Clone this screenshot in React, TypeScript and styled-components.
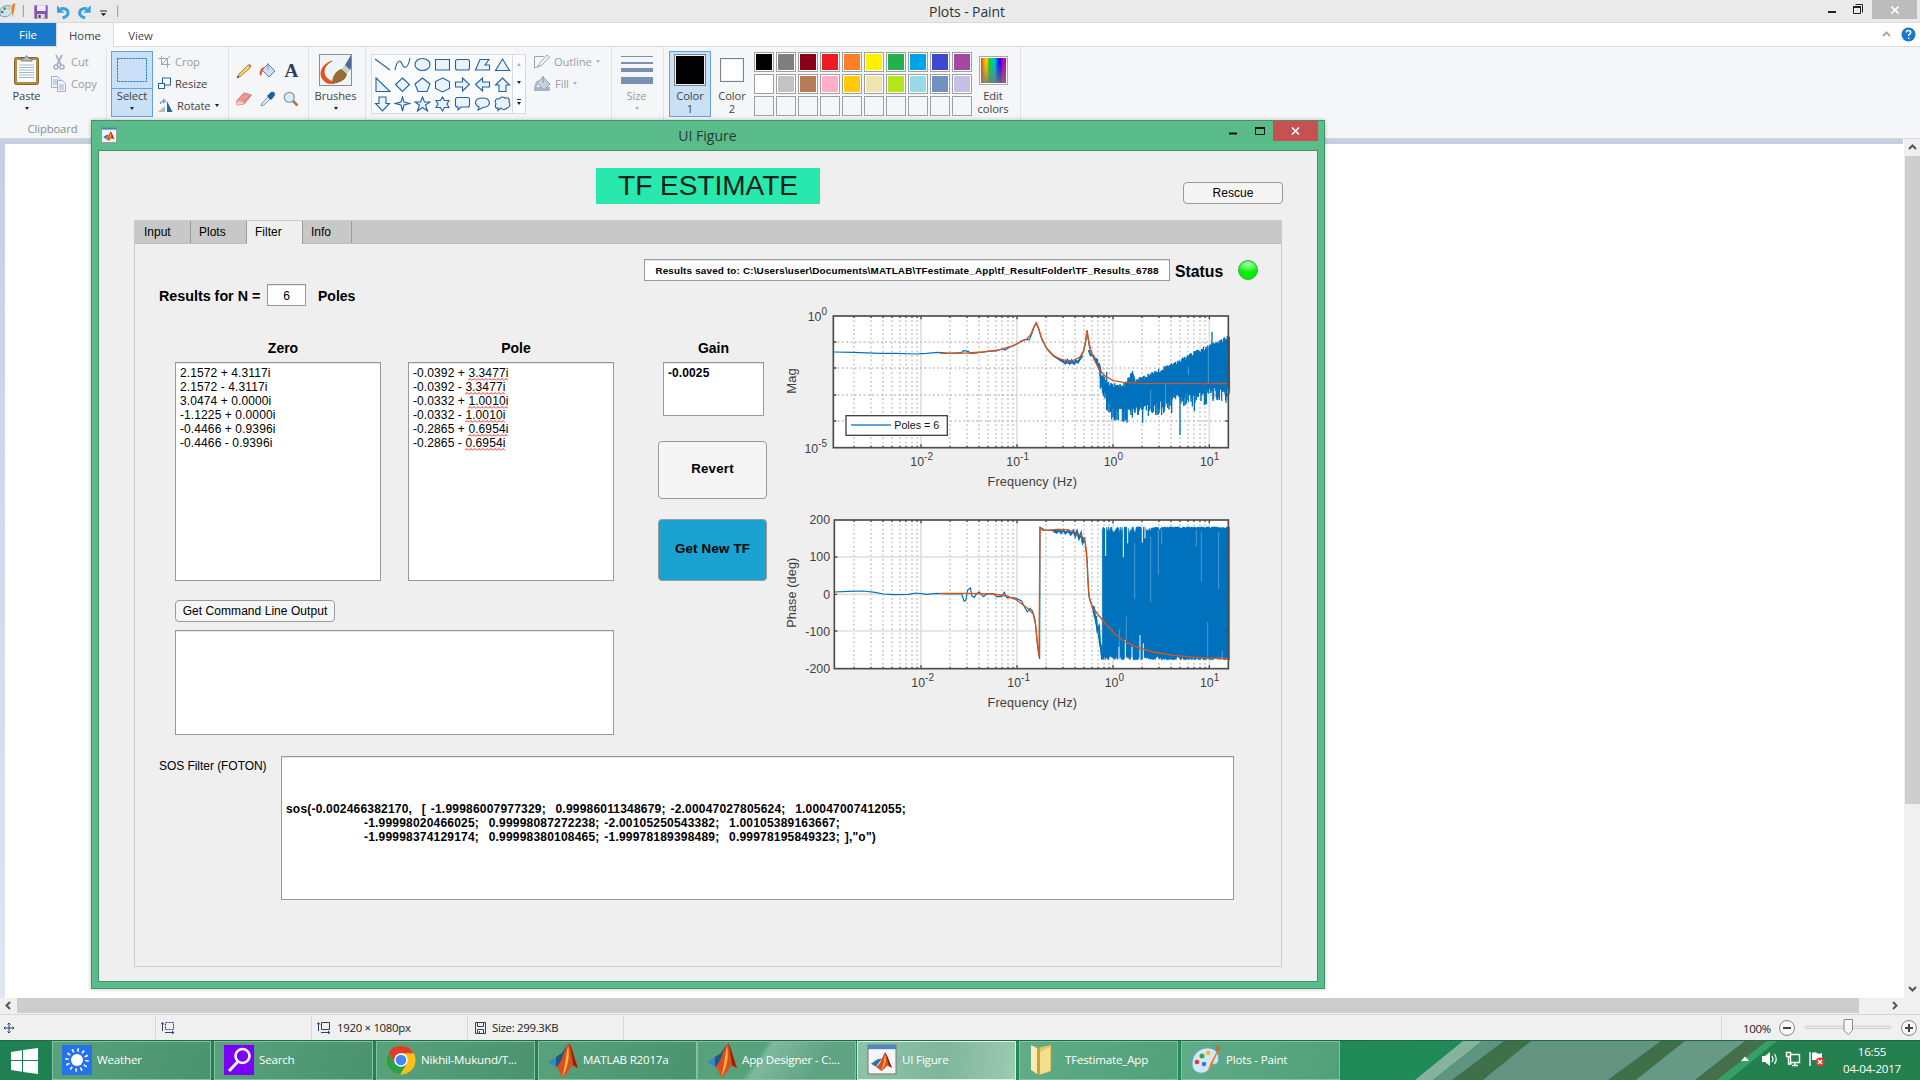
import React from "react";
import styled, { createGlobalStyle, css } from "styled-components";

const ui = `"Open Sans", "Noto Sans", sans-serif`;
const arial = `"Liberation Sans", Arial, sans-serif`;

const Global = createGlobalStyle`
  * { box-sizing: border-box; }
  html, body { margin: 0; padding: 0; overflow: hidden; }
  svg { display: block; flex: none; }
`;

/* ---------- desktop ---------- */
const Desktop = styled.div`
  position: relative;
  width: 1920px;
  height: 1080px;
  display: flex;
  flex-direction: column;
  overflow: hidden;
  background: #fff;
  font-family: ${ui};
`;

/* ---------- Paint ---------- */
const TitleBar = styled.header`
  height: 23px;
  display: grid;
  grid-template-columns: 1fr auto 1fr;
  background: #eaeaea;
  border-bottom: 1px solid #d9d9d9;
`;
const QuickTools = styled.div`
  display: flex;
  align-items: flex-start;
`;
const AppTitle = styled.div`
  font-size: 14px;
  line-height: 23px;
  color: #333;
  letter-spacing: -0.1px;
  padding-left: 14px;
`;
const WindowButtons = styled.div`
  display: flex;
  justify-content: flex-end;
  padding-right: 3px;
`;
const CloseButton = styled.button<{ $w: number; $h: number; $bg: string }>`
  width: ${(p) => p.$w}px;
  height: ${(p) => p.$h}px;
  padding: 0;
  border: 0;
  background: ${(p) => p.$bg};
  display: flex;
  align-items: center;
  justify-content: center;
`;
const MenuTabs = styled.nav`
  height: 24px;
  display: flex;
  background: #fff;
  border-bottom: 1px solid #d9dadc;
  font-size: 11.3px;
  color: #444;
`;
const FileTab = styled.div`
  width: 56px;
  height: 23px;
  line-height: 24px;
  text-align: center;
  background: #1979ca;
  color: #fff;
`;
const MenuTab = styled.div<{ $active?: boolean; $w: number }>`
  width: ${(p) => p.$w}px;
  height: 24px;
  line-height: 26px;
  text-align: center;
  ${(p) =>
    p.$active &&
    css`
      background: #f5f6f7;
      border: 1px solid #dadbdc;
      border-top: 0;
      border-bottom: 0;
    `}
`;
const MenuEnd = styled.div`
  margin-left: auto;
  display: flex;
  align-items: center;
  gap: 10px;
  padding-right: 4px;
`;
const Ribbon = styled.section`
  height: 92px;
  display: flex;
  background: #f4f6f8;
  border-bottom: 1px solid #d5d8dc;
  font-size: 11.2px;
  letter-spacing: -0.1px;
  color: #444;
`;
const Group = styled.div<{ $w: number; $pl?: number }>`
  width: ${(p) => p.$w}px;
  padding-left: ${(p) => p.$pl ?? 0}px;
  padding-top: 4px;
  display: flex;
  align-items: flex-start;
  flex: none;
  border-right: 1px solid #e0e2e4;
`;
const ClipboardGroup = styled(Group)`
  flex-wrap: wrap;
`;
const GroupName = styled.div`
  width: 105px;
  line-height: 16px;
  margin-top: 3px;
  text-align: center;
  color: #8a8d90;
`;
const BigButton = styled.div<{ $w: number; $on?: boolean; $off?: boolean }>`
  width: ${(p) => p.$w}px;
  height: 66px;
  display: flex;
  flex-direction: column;
  align-items: center;
  color: ${(p) => (p.$off ? "#999ca0" : "#444")};
  border: 1px solid ${(p) => (p.$on ? "#62a2e4" : "transparent")};
  background: ${(p) => (p.$on ? "#c9e0f7" : "transparent")};
`;
const IconSlot = styled.div<{ $line?: boolean }>`
  height: 37px;
  width: 100%;
  display: flex;
  justify-content: center;
  align-items: center;
  border-bottom: 1px solid ${(p) => (p.$line ? "#62a2e4" : "transparent")};
`;
const BigLabel = styled.div`
  text-align: center;
  line-height: 13px;
`;
const Down = styled.i<{ $off?: boolean; $up?: boolean; $mt?: number }>`
  width: 0;
  height: 0;
  margin-top: ${(p) => p.$mt ?? 0}px;
  border: 2.5px solid transparent;
  ${(p) =>
    p.$up
      ? css`border-top: 0; border-bottom: 3px solid #aeb2b8;`
      : css`border-bottom: 0; border-top: 3px solid ${p.$off ? "#aeb2b8" : "#222"};`}
`;
const SmallRows = styled.div<{ $ml: number }>`
  margin-left: ${(p) => p.$ml}px;
  display: flex;
  flex-direction: column;
`;
const SmallRow = styled.div<{ $off?: boolean }>`
  height: 22px;
  padding-bottom: 1px;
  display: flex;
  align-items: center;
  gap: 4px;
  color: ${(p) => (p.$off ? "#9a9da1" : "#444")};
  white-space: nowrap;
`;
const ToolGrid = styled.div`
  display: grid;
  grid-template-columns: repeat(3, 23.7px);
  grid-auto-rows: 28px;
  padding-top: 6px;
  justify-items: center;
  align-items: center;
`;
const ShapeBox = styled.div`
  height: 60px;
  margin-top: 3px;
  display: flex;
  border: 1px solid #d8dadd;
  background: #fafbfd;
`;
const ShapeGrid = styled.div`
  display: grid;
  grid-template-columns: repeat(7, 20px);
  grid-auto-rows: 19.7px;
  align-items: center;
  justify-items: center;
`;
const ShapeScroll = styled.div`
  width: 13px;
  display: flex;
  flex-direction: column;
  align-items: center;
  justify-content: space-around;
  border-left: 1px solid #d8dadd;
`;
const MoreShapes = styled.div`
  border-top: 1px solid #333;
  padding-top: 2px;
`;
const SizeBars = styled.div`
  width: 32px;
  height: 28px;
  display: flex;
  flex-direction: column;
  justify-content: space-between;
`;
const Bar = styled.div<{ $h: number }>`
  height: ${(p) => p.$h}px;
  background: #7b8fb4;
`;
const Chip = styled.div<{ $s: number; $c: string }>`
  width: ${(p) => p.$s}px;
  height: ${(p) => p.$s}px;
  border: 1px solid #7d8287;
  padding: 1px;
  background: linear-gradient(${(p) => p.$c}, ${(p) => p.$c}) content-box, #e8f1fa;
`;
const Palette = styled.div`
  display: grid;
  grid-template-columns: repeat(10, 20px);
  grid-auto-rows: 20px;
  gap: 2px;
  margin: 1px 0 0 1px;
`;
const Cell = styled.div<{ $c?: string }>`
  border: 1px solid #a0a0a0;
  padding: 1px;
  background: ${(p) => (p.$c ? `linear-gradient(${p.$c}, ${p.$c}) content-box, #fff` : "#f5f6f8")};
`;
const Rainbow = styled.div`
  width: 29px;
  height: 29px;
  border: 2px solid #fff;
  outline: 1px solid #aaa;
  outline-offset: -1px;
  background: linear-gradient(transparent 20%, #777c),
    linear-gradient(90deg, #e33, #f90, #dd0, #2c2, #0c8, #0bd, #04e, #30d, #c0c, #e03);
`;
const Workspace = styled.main`
  height: 859px;
  display: flex;
`;
const Margin = styled.div`
  width: 5px;
  background: linear-gradient(#c5cfe0, #dde7f2);
`;
const Canvas = styled.div`
  flex: 1;
  border-top: 5px solid #c5cfe0;
  background: #fff;
`;
const VScroll = styled.div`
  width: 17px;
  display: flex;
  flex-direction: column;
  align-items: center;
  background: #f0f0f0;
  border-left: 1px solid #fff;
`;
const VThumb = styled.div`
  width: 15px;
  height: 648px;
  background: #cdcdcd;
`;
const ArrowSlot = styled.div<{ $w: number; $h: number }>`
  width: ${(p) => p.$w}px;
  height: ${(p) => p.$h}px;
  display: flex;
  align-items: center;
  justify-content: center;
`;
const Fill = styled.div`
  flex: 1;
`;
const HScroll = styled.div`
  height: 16px;
  display: flex;
  background: #f0f0f0;
`;
const HThumb = styled.div`
  width: 1842px;
  height: 15px;
  background: #cdcdcd;
`;
const StatusBar = styled.footer`
  height: 26px;
  display: flex;
  background: #f0f0f0;
  border-top: 1px solid #d7d7d7;
  font-size: 11.4px;
  letter-spacing: -0.3px;
  color: #222;
  padding-top: 1px;
`;
const StatusPart = styled.div<{ $w: number; $pl?: number }>`
  width: ${(p) => p.$w}px;
  padding-left: ${(p) => p.$pl ?? 4}px;
  display: flex;
  align-items: center;
  gap: 6px;
  height: 23px;
  border-right: 1px solid #d7d7d7;
`;
const ZoomPart = styled.div`
  width: 198px;
  display: flex;
  align-items: center;
  gap: 2px;
  padding-left: 21px;
`;

/* ---------- task bar ---------- */
const TaskBar = styled.div`
  position: relative;
  height: 40px;
  display: flex;
  background: linear-gradient(90deg, #1f8052, #238a5a 60%, #1f8a58 72%, #238f5a);
  border-top: 1px solid #1b6b46;
`;
const Wallpaper = styled.div`
  position: absolute;
  left: 1341px;
  top: 0;
`;
const Start = styled.div`
  width: 52px;
  display: flex;
  align-items: center;
  justify-content: center;
  padding: 0 3px 0 0;
`;
const Task = styled.div<{ $bg: string; $ml?: number; $active?: boolean; $gap?: number }>`
  width: 159px;
  height: 39px;
  margin-left: ${(p) => p.$ml ?? 3}px;
  padding: 0 0 2px 9px;
  display: flex;
  align-items: center;
  gap: ${(p) => p.$gap ?? 5}px;
  border: 1px solid ${(p) => (p.$active ? "#dff2e8" : "#86c0a2")};
  background: ${(p) => p.$bg};
  color: #fff;
  font-size: 11.6px;
  letter-spacing: -0.2px;
  white-space: nowrap;
`;
const Tray = styled.div`
  position: relative;
  margin-left: auto;
  display: flex;
  align-items: center;
  padding: 0 18px 2px 0;
`;
const TrayIcons = styled.div`
  margin-right: 13px;
  padding-bottom: 1px;
`;
const Clock = styled.div`
  width: 60px;
  text-align: center;
  color: #fff;
  font-size: 11.6px;
  letter-spacing: -0.25px;
  line-height: 17px;
`;

/* ---------- UI Figure window ---------- */
const Figure = styled.section`
  position: absolute;
  left: 91px;
  top: 120px;
  width: 1234px;
  height: 869px;
  display: flex;
  flex-direction: column;
  padding: 0 6px 6px;
  background: #5bbc8b;
  border: 1px solid #449168;
  box-shadow: 0 0 4px rgba(0, 0, 0, 0.25);
`;
const FigureBar = styled.div`
  height: 29px;
  flex: none;
  display: grid;
  grid-template-columns: 1fr auto 1fr;
`;
const FigureIcon = styled.div`
  padding: 6px 0 0 3px;
`;
const FigureName = styled.div`
  font-size: 14px;
  letter-spacing: 0;
  line-height: 29px;
  padding-right: 1px;
  color: #263a30;
`;
const FigureButtons = styled.div`
  display: flex;
  justify-content: flex-end;
  align-items: flex-start;
`;
const FigureBody = styled.div`
  flex: 1;
  border: 1px solid #449168;
  background: #efefef;
  padding: 0 35px 14px 35px;
  display: flex;
  flex-direction: column;
  font-family: ${arial};
  font-size: 12px;
  color: #000;
`;
const Head = styled.div`
  height: 69px;
  display: grid;
  grid-template-columns: 1fr auto 1fr;
`;
const Banner = styled.h1`
  margin: 17px 0 0;
  width: 224px;
  height: 36px;
  line-height: 36px;
  text-align: center;
  background: #28e8ae;
  color: #0c2216;
  font-size: 28px;
  font-weight: 400;
`;
const Button = styled.button<{ $w: number; $h: number; $blue?: boolean; $big?: boolean }>`
  width: ${(p) => p.$w}px;
  height: ${(p) => p.$h}px;
  padding: 0 0 ${(p) => (p.$big ? 3 : 0)}px;
  border: 1px solid #999;
  border-radius: 4px;
  background: ${(p) => (p.$blue ? "#1aa2d0" : "#f5f5f5")};
  font: ${(p) => (p.$big ? "bold 13.3px" : "12px")} ${arial};
  letter-spacing: ${(p) => (p.$big ? "0.2px" : "0.05px")};
  color: #000;
  white-space: nowrap;
`;
const RescueSlot = styled.div`
  display: flex;
  justify-content: flex-end;
  padding-top: 31px;
  margin-right: -1px;
`;
const TabPanel = styled.div`
  flex: 1;
  border: 1px solid #ccc;
  display: flex;
  flex-direction: column;
`;
const TabStrip = styled.div`
  height: 23px;
  display: flex;
  background: #c8c8c8;
  border-bottom: 1px solid #bdbdbd;
`;
const Tab = styled.div<{ $w: number; $on?: boolean }>`
  width: ${(p) => p.$w}px;
  height: ${(p) => (p.$on ? 23 : 22)}px;
  padding-left: 8px;
  line-height: 22px;
  border-right: 1px solid #9c9c9c;
  background: ${(p) => (p.$on ? "#efefef" : "transparent")};
  &:first-child { padding-left: 9px; }
`;
const Columns = styled.div`
  height: 512px;
  display: grid;
  grid-template-columns: 509px 1fr;
`;
const LeftCol = styled.div`
  padding: 40px 0 0 24px;
`;
const RightCol = styled.div`
  padding-top: 15px;
`;
const Line = styled.div<{ $mt?: number; $ml?: number; $gap?: number; $center?: boolean }>`
  display: flex;
  align-items: ${(p) => (p.$center ? "center" : "flex-start")};
  margin: ${(p) => p.$mt ?? 0}px 0 0 ${(p) => p.$ml ?? 0}px;
  gap: ${(p) => p.$gap ?? 0}px;
`;
const Bold = styled.span<{ $s: number; $w?: number }>`
  font-weight: bold;
  font-size: ${(p) => p.$s}px;
  width: ${(p) => (p.$w ? p.$w + "px" : "auto")};
  padding-top: 2px;
  white-space: nowrap;
`;
const Field = styled.div<{ $w: number; $h: number }>`
  width: ${(p) => p.$w}px;
  height: ${(p) => p.$h}px;
  border: 1px solid #999;
  background: #fff;
  box-shadow: inset 0 1px 0 #e4e4e4;
`;
const CountField = styled(Field)`
  text-align: center;
  line-height: 22px;
`;
const PathField = styled(Field)`
  text-align: center;
  font-weight: bold;
  font-size: 9.9px;
  letter-spacing: 0.17px;
  line-height: 22px;
  white-space: nowrap;
`;
const ListField = styled(Field)<{ $bold?: boolean }>`
  padding: 3px 0 0 4px;
  line-height: 14px;
  letter-spacing: 0.1px;
  font-weight: ${(p) => (p.$bold ? "bold" : "normal")};
`;
const Sos = styled(Field)`
  padding: 45px 0 0 4px;
  font-weight: bold;
  line-height: 14px;
  white-space: pre;
  font-size: 12px;
  letter-spacing: 0.2px;
  word-spacing: 1.3px;
`;
const SosLine = styled.div<{ $indent?: boolean }>`
  padding-left: ${(p) => (p.$indent ? 78 : 0)}px;
`;
const Column = styled.div<{ $w: number }>`
  width: ${(p) => p.$w}px;
`;
const ColumnTitle = styled.div<{ $pl?: number }>`
  width: 100%;
  height: 23px;
  line-height: 18px;
  font-size: 14px;
  font-weight: bold;
  text-align: center;
  padding-left: ${(p) => p.$pl ?? 10}px;
`;
const Misspelt = styled.span`
  padding-bottom: 1px;
  background: url("data:image/svg+xml,%3Csvg xmlns='http://www.w3.org/2000/svg' width='4' height='3'%3E%3Cpath d='M0 2.500L2 .500L4 2.500' fill='none' stroke='%23e22' stroke-width='1'/%3E%3C/svg%3E")
    0 100% repeat-x;
`;
const GainCol = styled.div`
  width: 136px;
  padding: 39px 0 0 14px;
  display: flex;
  flex-direction: column;
`;
const GainBox = styled.div`
  padding-left: 5px;
  width: 106px;
  margin: 19px 0 25px;
`;
const ButtonStack = styled.div`
  display: flex;
  flex-direction: column;
  gap: 20px;
`;
const Plots = styled.div`
  padding-top: 19px;
`;
const Lamp = styled.div`
  width: 20px;
  height: 20px;
  margin-left: 15px;
  border-radius: 50%;
  border: 1px solid #3fae3f;
  background: radial-gradient(ellipse 70% 45% at 50% 20%, #a6ffa6, transparent), #00ee00;
`;
const SosLabel = styled.div`
  width: 122px;
  padding-top: 3px;
  letter-spacing: -0.05px;
`;

/* ---------- icons ---------- */
type P = { w?: number; h?: number };
const Membrane = ({ s = 30 }: { s?: number }) => (
  <svg width={s} height={s * 1.2} viewBox="0 0 30 36" preserveAspectRatio="none">
    <path d="M0 20L8 15L13 18L8 25Z" fill="#3b86c4" />
    <path d="M8 15L14 11L19 3L16 20L8 25Z" fill="#1f5687" />
    <path d="M8 25C14 22 16 6 21 1C24 4 27 19 30 26L24 24C20 29 17 35 14 35C12 31 11 26 8 25Z" fill="#d9501e" />
    <path d="M14 35C17 26 18 13 20 4C22 14 20 26 14 35Z" fill="#ffb347" />
    <path d="M21 1C24 5 27 19 30 26L25 23C24 15 23 8 21 1Z" fill="#8c2413" />
  </svg>
);
const FigIcon = ({ w = 16, h = 16 }: P) => (
  <svg width={w} height={h} viewBox="0 0 30 30" preserveAspectRatio="none">
    <rect x="1" y="1" width="28" height="28" fill="#f4f5f6" stroke="#777" />
    <rect x="1" y="1" width="28" height="4" fill="#4f86c0" />
    <path d="M4 19L10 15L15 14L9 22Z" fill="#2f73b4" />
    <path d="M9 22C14 20 15 12 18 8C21 12 23 19 25 23L20 21C18 23 16 26 14 26Z" fill="#d9501e" />
    <path d="M14 26C17 20 17 15 18 10C20 16 18 22 14 26Z" fill="#ffb347" />
    <path d="M18 8C21 12 23 19 25 23L22 21Z" fill="#8c2413" />
  </svg>
);
const PaletteIcon = ({ w = 30, h = 31 }: P) => (
  <svg width={w} height={h} viewBox="0 0 30 31" preserveAspectRatio="none">
    <path d="M1 18C2 9 10 3 18 4C26 5 29 11 27 18C25 22 21 19 19 22C18 27 14 30 8 29C2 27 1 24 1 18Z" fill="#d3e8f7" stroke="#5fa3cf" />
    <circle cx="6" cy="18" r="2.3" fill="#e03c31" />
    <circle cx="11" cy="12" r="2.5" fill="#37a647" />
    <circle cx="17" cy="9" r="2.3" fill="#f4c020" />
    <circle cx="13" cy="20" r="2.3" fill="#3c7fb8" />
    <path d="M17 30L19 20L26 7L27 8L21 21Z" fill="#ee7f26" />
    <path d="M24 1L30 3L28 8L25 7Z" fill="#a77a4c" />
  </svg>
);
const Paste = () => (
  <svg width="25" height="30" viewBox="0 0 25 30">
    <rect x="0.5" y="2.5" width="24" height="27" rx="2" fill="#b98845" stroke="#8a6431" />
    <rect x="3" y="5" width="19" height="22" fill="#fff" />
    <path d="M5 10h15M5 12.5h15M5 15h15M5 17.5h15M5 20h15M5 22.5h15" stroke="#9db7d3" />
    <path d="M7 6V3.500h3L12.500 0.500L15 3.500h3V6Z" fill="#b5b9bd" stroke="#696d70" strokeWidth="0.8" />
  </svg>
);
const Cut = () => (
  <svg width="16" height="16" viewBox="0 0 16 16">
    <path d="M5 1L10 11M11 1L6 11" stroke="#a3b1c8" strokeWidth="1.8" />
    <circle cx="5" cy="13" r="2" fill="none" stroke="#a3b1c8" strokeWidth="1.6" />
    <circle cx="11" cy="13" r="2" fill="none" stroke="#a3b1c8" strokeWidth="1.6" />
  </svg>
);
const Copy = () => (
  <svg width="16" height="16" viewBox="0 0 16 16" fill="#eef2f8" stroke="#a3b1c8">
    <path d="M0.500 0.500h6l3 3v8h-9zM2 4h5M2 6h5M2 8h5" />
    <path d="M6.500 4.500h5l3 3v8h-8zM8 9h5M8 11h5M8 13h5" />
  </svg>
);
const Crop = () => (
  <svg width="13" height="13" viewBox="0 0 13 13" fill="none" stroke="#96a6c0">
    <path d="M3.500 1v8.500H12M0 3.500h9.500V13M3.500 9.500L12 1" />
  </svg>
);
const Resize = () => (
  <svg width="13" height="13" viewBox="0 0 13 13" stroke="#1f659e" fill="#fff">
    <rect x="4.500" y="1" width="8" height="7" />
    <rect x="0.500" y="6.500" width="6" height="5" />
  </svg>
);
const Rotate = () => (
  <svg width="15" height="14" viewBox="0 0 15 14">
    <path d="M0 13L7 7V13Z" fill="#b4b9bd" />
    <path d="M9 2L14.500 13H9Z" fill="#206aa8" />
    <path d="M2 5Q3 1.500 6 2M5 0L7.500 2L5 4" stroke="#2f7cc0" fill="none" />
  </svg>
);
const Pencil = () => (
  <svg width="16" height="16" viewBox="0 0 16 16">
    <path d="M1 15L3 11L12 2L14.500 4.500L5 13Z" fill="#f1cf6b" stroke="#9a7430" strokeWidth="0.8" />
    <path d="M12 2L13.500 0.800L15.500 2.800L14.500 4.500Z" fill="#dc7080" />
    <path d="M1 15L2 12.700L3.400 14Z" fill="#333" />
  </svg>
);
const Bucket = ({ off }: { off?: boolean }) => (
  <svg width="17" height="16" viewBox="0 0 17 16">
    {off && <path d="M0 11h16v4H0z" fill="#a8b4c9" />}
    <path d="M3 7L9 1L16 8L10 14Z" fill={off ? "#c7d0de" : "#c9e0f3"} stroke={off ? "#95a3ba" : "#5a7ea6"} />
    <path d="M9 7V0" stroke="#8795aa" />
    <path d="M6 4C2 4 0 8 1 13C3 12 3 9 4 7Z" fill={off ? "#a8b4c9" : "#e5572b"} />
  </svg>
);
const TextTool = styled.span`
  font: bold 19px/20px "Liberation Serif", serif;
  color: #27405f;
`;
const Eraser = () => (
  <svg width="16" height="14" viewBox="0 0 16 14">
    <path d="M0.500 9L8 1L15.500 3L8 12L1 13Z" fill="#ee9a94" stroke="#bd6660" strokeWidth="0.8" />
    <path d="M0.500 9L7 10L8 12L1 13Z" fill="#f6c9c5" />
    <path d="M7 10L15 3" stroke="#c9726b" strokeWidth="0.8" />
  </svg>
);
const Picker = () => (
  <svg width="16" height="16" viewBox="0 0 16 16">
    <path d="M1 15L2 12L8 6L10 8L4 14Z" fill="#d6e6f4" stroke="#6f8aa8" strokeWidth="0.8" />
    <path d="M7 5L11 9L12.500 7.500L15 4Q15 0 11 1L8.500 3.500Z" fill="#1e5ea5" />
  </svg>
);
const Magnifier = () => (
  <svg width="16" height="16" viewBox="0 0 16 16">
    <path d="M9 9L14.500 14.500" stroke="#9d7c5c" strokeWidth="2.6" />
    <circle cx="6.300" cy="6.300" r="5" fill="#dcecf9" stroke="#8c97a3" strokeWidth="1.300" />
  </svg>
);
const Brush = () => (
  <svg width="33" height="33" viewBox="0 0 33 33">
    <rect x="0.500" y="0.500" width="32" height="31" fill="#eef5f7" stroke="#8b8f92" />
    <path d="M13 7C4 10 0 17 3 24C6 29 11 31 16 28C11 28 5 23 5 18C5 13 9 9 13 7Z" fill="#e2531f" stroke="#e2531f" />
    <path d="M13 30C13 22 17 16 23 15L28 20C27 27 19 29 13 30Z" fill="#9a6a35" />
    <path d="M23 15L26 11L31 16L28 20Z" fill="#c9ced3" />
    <path d="M26 11L32 1V14L31 16Z" fill="#4d6b93" />
  </svg>
);
const shapePaths = [
  "M1 2L16 13",
  "M1 13C3 3 6 2 8 7C10 12 14 12 16 1",
  "M1 7.500A7.500 6 0 1 0 16 7.500A7.500 6 0 1 0 1 7.500Z",
  "M1.500 2.500h14v10.500h-14z",
  "M3.500 2.500h10q2 0 2 2v6.500q0 2-2 2h-10q-2 0-2-2v-6.500q0-2 2-2z",
  "M6 2.500h9L11 8h4.500v5H1.500Z",
  "M8.500 2L15.500 13.500H1.500Z",
  "M2 1L16 14.500H2Z",
  "M8.500 1L15.500 7.500L8.500 14.500L1.500 7.500Z",
  "M8.500 1L16 7L13 14.500H4L1 7Z",
  "M8.500 1L15.500 4.500V11.500L8.500 15L1.500 11.500V4.500Z",
  "M1.500 5h7V1l7 6.500l-7 6.500v-4h-7z",
  "M15.500 5h-7V1l-7 6.500l7 6.500v-4h7z",
  "M8.500 1l7 7h-3.500v6.500H5V8H1.500z",
  "M5 1h7v6.500h3.500L8.500 15L1.500 7.500H5z",
  "M8.500 1L10 6L15.500 7.500L10 9L8.500 15L7 9L1.500 7.500L7 6Z",
  "M8.500 1L10.500 6H16L11.500 9L13.500 15L8.500 11.500L3.500 15L5.500 9L1 6H6.500Z",
  "M8.500 1L10.500 4.500H15L13 8L15 11.500H10.500L8.500 15L6.500 11.500H2L4 8L2 4.500H6.500Z",
  "M3.500 1.500h10q2 0 2 2v5.500q0 2-2 2H7L4 14V11q-2.500 0-2.500-2V3.500q0-2 2-2z",
  "M5 11C-1 8 1 2 8.500 2C17 2 18 11 9 11.500L4 14Z",
  "M4 12C1 13 1 9 2 8C0 5 2 2 5 3C7 0 10 1 11 2C14 1 16 3 15 6C17 9 15 12 13 12C11 14 8 14 7 12L4 14.500Z",
];
const Shape = ({ d }: { d: string }) => (
  <svg width="17" height="16" viewBox="0 0 17 16">
    <path d={d} fill={/z$/i.test(d) ? "#eaf3fb" : "none"} stroke="#2163a0" strokeWidth="1.100" />
  </svg>
);
const Chevron = ({ dir, c = "#555" }: { dir: "up" | "down" | "left" | "right"; c?: string }) => {
  const d = { up: "M1 6L4.500 2.500L8 6", down: "M1 3L4.500 6.500L8 3", left: "M6 1L2.500 4.500L6 8", right: "M3 1L6.500 4.500L3 8" }[dir];
  return (
    <svg width="9" height="9" viewBox="0 0 9 9">
      <path d={d} fill="none" stroke={c} strokeWidth="2" />
    </svg>
  );
};
const QuickIcons = () => (
  <svg width="120" height="22" viewBox="0 0 360 66">
    <path d="M0 30C8 16 26 12 38 22C44 32 36 36 32 40C30 50 12 54 0 46Z" fill="#c9e6f5" stroke="#5aa6cf" strokeWidth="3" />
    <circle cx="7" cy="36" r="4" fill="#e03c31" />
    <circle cx="14" cy="26" r="4" fill="#37a647" />
    <circle cx="26" cy="25" r="4" fill="#f4c020" />
    <path d="M38 50L34 30L38 12L46 10L43 30Z" fill="#e8842c" />
    <path d="M70 15V51M353 15V51" stroke="#999" strokeWidth="3" />
    <path d="M103 16H143V56H103Z" fill="#8255b5" />
    <path d="M111 16H137V33H111Z" fill="#f2edf8" />
    <path d="M112 42H134V56H112Z" fill="#ddd" />
    <path d="M116 45h6v9h-6z" fill="#444" />
    <path d="M182 26C207 22 213 46 188 54" fill="none" stroke="#3aa0dd" strokeWidth="9" />
    <path d="M171 16V38H193Z" fill="#3aa0dd" />
    <path d="M261 26C236 22 230 46 255 54" fill="none" stroke="#3aa0dd" strokeWidth="9" />
    <path d="M272 16V38H250Z" fill="#3aa0dd" />
    <path d="M300 33H321" stroke="#222" strokeWidth="3" />
    <path d="M302 40H319L310.500 48Z" fill="#222" />
  </svg>
);

/* ---------- plots (drawn at three units per pixel) ---------- */
const BLUE = "#0072bd";
const RED = "#d95319";
const rnd = (n: number) => {
  const v = Math.sin(n * 127.1 + 11.7) * 43758.5453;
  return v - Math.floor(v);
};
const lerp = (pts: number[][], x: number) => {
  for (let i = 1; i < pts.length; i++)
    if (x <= pts[i][0]) {
      const [a, b] = [pts[i - 1], pts[i]];
      return a[1] + ((b[1] - a[1]) * (x - a[0])) / (b[0] - a[0]);
    }
  return pts[pts.length - 1][1];
};
const decades = [135, 423, 711, 999, 1288];
const minors: number[] = [];
decades.forEach((d) => {
  for (let k = 2; k < 10; k++) {
    const x = d + Math.log10(k) * 288;
    if (x > 165 && x < 1340) minors.push(Math.round(x / 3) * 3);
  }
});
const Axes = ({ l, t, b, ys, minorY }: { l: number; t: number; b: number; ys: number[]; minorY?: boolean }) => (
  <g>
    <rect x={l} y={t} width={1345 - l} height={b - t} fill="#fff" />
    <g stroke="#dfdfdf" strokeWidth="5">
      {decades.slice(1).map((x) => (
        <path key={x} d={`M${x} ${t}V${b}`} />
      ))}
      {!minorY && ys.map((y) => <path key={y} d={`M${l} ${y}H1345`} />)}
    </g>
    <g stroke="#bcbcbc" strokeWidth="4" strokeDasharray="5 8">
      {minors.map((x, i) => (
        <path key={i} d={`M${x} ${t}V${b}`} />
      ))}
      {minorY && ys.map((y) => <path key={y} d={`M${l} ${y}H1345`} />)}
    </g>
  </g>
);
const Frame = ({ l, t, b, ys }: { l: number; t: number; b: number; ys: number[] }) => (
  <g stroke="#4c4c4c" strokeWidth="4" fill="none">
    <rect x={l} y={t} width={1345 - l} height={b - t} strokeWidth="5" />
    {decades.slice(1).map((x) => (
      <path key={x} d={`M${x} ${t}v10M${x} ${b}v-10`} />
    ))}
    {minors.map((x, i) => (
      <path key={i} d={`M${x} ${t}v6M${x} ${b}v-6`} />
    ))}
    {ys.map((y) => (
      <path key={y} d={`M${l} ${y}h9M1345 ${y}h-9`} />
    ))}
  </g>
);
const Exp = ({ x, y, e, anchor = "start" }: { x: number; y: number; e: string; anchor?: "start" | "end" }) => (
  <text x={x} y={y} textAnchor={anchor}>
    10
    <tspan dy="-17" fontSize="30">
      {e}
    </tspan>
  </text>
);
const PlotSvg = styled.svg`
  font-family: ${arial};
  font-size: 37px;
  fill: #404040;
`;
const magTop = [[960, 215], [975, 232], [990, 252], [1035, 250], [1050, 222], [1056, 208], [1066, 238], [1100, 226], [1150, 202], [1200, 178], [1250, 152], [1300, 130], [1348, 108]];
const magBottom = [[960, 250], [972, 290], [985, 330], [1000, 348], [1040, 348], [1100, 336], [1150, 322], [1200, 302], [1250, 300], [1300, 285], [1348, 285]];
const magNoise = (() => {
  let s = "";
  for (let x = 960; x <= 1348; x += 2) {
    const hi = lerp(magTop, x) + rnd(x) * 14 - 3;
    const lo = lerp(magBottom, x) - 22 + Math.pow(rnd(x + 0.5), 2) * 44;
    s += `${x} ${hi.toFixed(1)} ${x + 1} ${lo.toFixed(1)} `;
  }
  return s;
})();
const MagPlot = () => {
  const ys = [126, 204, 285, 363];
  return (
    <PlotSvg width="460" height="200" viewBox="0 0 1380 600">
      <Axes l={160} t={48} b={443} ys={ys} minorY />
      <g fill="none" stroke={BLUE} strokeWidth="3.500">
        <path d="M160 156L220 157L300 160L350 160L406 162L440 160L475 157L510 160L545 158L550 152L565 154L572 160L590 159L620 154L650 153L665 147L675 150L690 141L710 132L725 122L735 119L748 119L756 100L762 82L769 69L776 88L785 116L800 146L820 168L835 178L850 187L870 190L890 188L900 178L912 150L918 120L921 93L928 140L938 166L948 184L958 210L965 245L968 280" />
        <path d="M835 176L850 184L856 190L862 180L869 191L875 181L882 191L888 181L894 187L902 173L908 169M926 150L932 166L940 167L946 180L950 178L955 200L957 190L963 220" strokeWidth="6" />
        <polyline points={magNoise} strokeWidth="3" />
        <path d="M1003 330V362M1031 320V365M1040 330V361M1088 320V368M1200 290V405M1243 280V333M1175 290V340M1135 300V344M1296 96V200M1318 260V300M1338 260V308" strokeWidth="4" />
        <path d="M960 222L972 290M980 216V330" strokeWidth="4" />
      </g>
      <path d="M1285 140V250M1112 270V320M1225 200V225M1157 250V320" stroke="#4a9bd2" strokeWidth="3" />
      <path d="M481 160L560 159L610 156L660 149L700 137L740 117L752 104L762 80L769 68L776 85L785 115L800 145L820 166L840 177L860 182L880 181L900 171L911 152L917 122L921 90L926 122L932 150L943 180L958 209L975 228L1000 242L1030 247L1080 250L1348 251" fill="none" stroke={RED} strokeWidth="4" />
      <Frame l={160} t={48} b={443} ys={ys} />
      <rect x="198" y="347" width="304" height="59" fill="#fff" stroke="#444" strokeWidth="4" />
      <path d="M213 375H333" stroke="#2a88c9" strokeWidth="5" />
      <text x="343" y="387" fontSize="32" fill="#111">Poles = 6</text>
      <Exp x={141} y={62} e="0" anchor="end" />
      <Exp x={141} y={458} e="-5" anchor="end" />
      <Exp x={391} y={498} e="-2" />
      <Exp x={679} y={498} e="-1" />
      <Exp x={971} y={498} e="0" />
      <Exp x={1260} y={498} e="1" />
      <text x="757" y="558" fontSize="38" letterSpacing="0.5" textAnchor="middle">Frequency (Hz)</text>
      <text transform="translate(48 243) rotate(-90)" fontSize="39" textAnchor="middle">Mag</text>
    </PlotSvg>
  );
};
const phaseEdge = (() => {
  let top = "";
  let bottom = "";
  for (let x = 967; x <= 1348; x += 3) {
    const k = x < 1140 ? 22 : 6;
    top += `${x} ${81 + Math.round(Math.pow(rnd(x), 4) * k)} `;
    bottom = `${x} ${479 - Math.round(Math.pow(rnd(x + 9), 3) * 12)} ` + bottom;
  }
  return top + bottom;
})();
const PhasePlot = () => {
  const ys = [171, 283, 393];
  return (
    <PlotSvg width="460" height="220" viewBox="0 0 1380 660">
      <Axes l={163} t={60} b={506} ys={ys} />
      <g fill="none" stroke={BLUE} strokeWidth="3.500">
        <path d="M163 276L205 274L250 273L285 277L310 282L340 284L385 283L408 279L440 283L470 280L500 282L545 282L552 303L557 302L563 270L571 264L576 288L583 292L590 280L598 276L610 290L622 281L640 281L650 290L665 290L673 277L680 293L700 293L710 296L725 303L733 320L742 336L750 325L758 334L765 360L772 430L779 477L780 82L795 90L820 92L835 92L860 96L890 100L915 122L922 190L926 285L936 318L947 365L957 415L966 478" />
        <path d="M820 93L830 98L837 90L843 99L850 90L856 100L865 91L872 104L880 92L886 108L891 94L897 115L903 100L908 128L915 112M936 318L942 322L945 350L948 350L952 390L957 380L960 430L964 440L966 478" strokeWidth="6" />
      </g>
      <polygon points={phaseEdge} fill={BLUE} stroke={BLUE} strokeWidth="2" />
      <path d="M977 78V168M1030 78V172M1043 78V130M1087 78V128M1095 78V115M1017 440V482M1080 405V482M1090 430V482M1036 420V482M1056 440V482" stroke="#fff" strokeWidth="3" />
      <path d="M1064 130V297M1112 110V306M1135 90V225M1264 95V246M1316 95V267M1249 90V140M1145 90V133M1039 350V420M1283 366V470M1018 388V440M1327 452V478" stroke="#4a9bd2" strokeWidth="3" />
      <path d="M481 280L560 280L640 282L680 288L705 297L725 311L745 327L760 343L767 375L772 430L777 470L780 84L787 90L800 91L830 88L860 89L885 96L905 108L915 122L920 160L923 230L928 296L937 321L955 345L980 375L1005 402L1035 425L1075 443L1120 456L1180 466L1260 473L1348 477" fill="none" stroke={RED} strokeWidth="4" />
      <Frame l={163} t={60} b={506} ys={ys} />
      <g textAnchor="end">
        <text x="150" y="72">200</text>
        <text x="150" y="184">100</text>
        <text x="150" y="296">0</text>
        <text x="150" y="407">-100</text>
        <text x="150" y="518">-200</text>
      </g>
      <Exp x={394} y={560} e="-2" />
      <Exp x={682} y={560} e="-1" />
      <Exp x={974} y={560} e="0" />
      <Exp x={1260} y={560} e="1" />
      <text x="757" y="621" fontSize="38" letterSpacing="0.5" textAnchor="middle">Frequency (Hz)</text>
      <text transform="translate(47 278) rotate(-90)" fontSize="38" letterSpacing="0.3" textAnchor="middle">Phase (deg)</text>
    </PlotSvg>
  );
};

/* ---------- content ---------- */
const swatches = [
  "#000000", "#7f7f7f", "#880015", "#ed1c24", "#ff7f27", "#fff200", "#22b14c", "#00a2e8", "#3f48cc", "#a349a4",
  "#ffffff", "#c3c3c3", "#b97a57", "#ffaec9", "#ffc90e", "#efe4b0", "#b5e61d", "#99d9ea", "#7092be", "#c8bfe7",
];
const zeros = ["2.1572 + 4.3117i", "2.1572 - 4.3117i", "3.0474 + 0.0000i", "-1.1225 + 0.0000i", "-0.4466 + 0.9396i", "-0.4466 - 0.9396i"];
const poles = [
  ["-0.0392 + ", "3.3477i"], ["-0.0392 - ", "3.3477i"], ["-0.0332 + ", "1.0010i"],
  ["-0.0332 - ", "1.0010i"], ["-0.2865 + ", "0.6954i"], ["-0.2865 - ", "0.6954i"],
];
const green = "linear-gradient(115deg, #58a27c, #529a75 50%, #4b936e)";
const tealGreen = "linear-gradient(115deg, #60ad88, #50a07a)";

const PaintRibbon = () => (
  <Ribbon>
    <ClipboardGroup $w={107}>
      <BigButton $w={53}>
        <IconSlot><Paste /></IconSlot>
        <BigLabel>Paste</BigLabel>
        <Down $mt={5} />
      </BigButton>
      <SmallRows $ml={-2}>
        <SmallRow $off><Cut />Cut</SmallRow>
        <SmallRow $off><Copy />Copy</SmallRow>
      </SmallRows>
      <GroupName>Clipboard</GroupName>
    </ClipboardGroup>
    <Group $w={122} $pl={4}>
      <BigButton $w={42} $on>
        <IconSlot $line>
          <svg width="30" height="24"><rect x="0.500" y="0.500" width="29" height="23" fill="none" stroke="#1c6fb5" strokeDasharray="2 1" /></svg>
        </IconSlot>
        <BigLabel>Select</BigLabel>
        <Down $mt={5} />
      </BigButton>
      <SmallRows $ml={5}>
        <SmallRow $off><Crop />Crop</SmallRow>
        <SmallRow><Resize />Resize</SmallRow>
        <SmallRow><Rotate />Rotate<Down /></SmallRow>
      </SmallRows>
    </Group>
    <Group $w={80} $pl={3}>
      <ToolGrid>
        <Pencil /><Bucket /><TextTool>A</TextTool>
        <Eraser /><Picker /><Magnifier />
      </ToolGrid>
    </Group>
    <Group $w={57} $pl={2}>
      <BigButton $w={49}>
        <IconSlot><Brush /></IconSlot>
        <BigLabel>Brushes</BigLabel>
        <Down $mt={5} />
      </BigButton>
    </Group>
    <Group $w={246} $pl={5}>
      <ShapeBox>
        <ShapeGrid>{shapePaths.map((d) => <Shape key={d} d={d} />)}</ShapeGrid>
        <ShapeScroll><Down $up /><Down /><MoreShapes><Down as="div" /></MoreShapes></ShapeScroll>
      </ShapeBox>
      <SmallRows $ml={8}>
        <SmallRow $off>
          <svg width="16" height="15" viewBox="0 0 16 15" fill="none" stroke="#97a5bd">
            <path d="M10 2.500H0.500V14L4 12.500M4 13L6 9L13 1L15.500 3L8 11Z" />
          </svg>
          Outline<Down $off />
        </SmallRow>
        <SmallRow $off><Bucket off />Fill<Down $off /></SmallRow>
      </SmallRows>
    </Group>
    <Group $w={52}>
      <BigButton $w={49} $off>
        <IconSlot><SizeBars><Bar $h={1} /><Bar $h={2} /><Bar $h={4} /><Bar $h={7} /></SizeBars></IconSlot>
        <BigLabel>Size</BigLabel>
        <Down $off $mt={5} />
      </BigButton>
    </Group>
    <Group $w={357} $pl={5}>
      <BigButton $w={42} $on>
        <IconSlot><Chip $s={32} $c="#000" /></IconSlot>
        <BigLabel>Color<br />1</BigLabel>
      </BigButton>
      <BigButton $w={42}>
        <IconSlot><Chip $s={24} $c="#fff" /></IconSlot>
        <BigLabel>Color<br />2</BigLabel>
      </BigButton>
      <Palette>
        {Array.from({ length: 30 }, (_, i) => <Cell key={i} $c={swatches[i]} />)}
      </Palette>
      <BigButton $w={42}>
        <IconSlot><Rainbow /></IconSlot>
        <BigLabel>Edit<br />colors</BigLabel>
      </BigButton>
    </Group>
  </Ribbon>
);

const UIFigure = () => (
  <Figure>
    <FigureBar>
      <FigureIcon><FigIcon /></FigureIcon>
      <FigureName>UI Figure</FigureName>
      <FigureButtons>
        <svg width="48" height="20" viewBox="0 0 48 20">
          <path d="M4 12.500h8" stroke="#111" strokeWidth="2" />
          <path d="M30.500 6.500h9v7h-9z" fill="none" stroke="#111" />
          <path d="M30 7h10" stroke="#111" strokeWidth="2" />
        </svg>
        <CloseButton $w={45} $h={20} $bg="#c75050">
          <svg width="9" height="8" viewBox="0 0 9 8"><path d="M1 0.500L8 7.500M8 0.500L1 7.500" stroke="#fff" strokeWidth="1.600" /></svg>
        </CloseButton>
      </FigureButtons>
    </FigureBar>
    <FigureBody>
      <Head>
        <span />
        <Banner>TF ESTIMATE</Banner>
        <RescueSlot><Button $w={100} $h={22}>Rescue</Button></RescueSlot>
      </Head>
      <TabPanel>
        <TabStrip>
          <Tab $w={56}>Input</Tab>
          <Tab $w={56}>Plots</Tab>
          <Tab $w={56} $on>Filter</Tab>
          <Tab $w={49}>Info</Tab>
        </TabStrip>
        <Columns>
          <LeftCol>
            <Line $center>
              <Bold $s={14.3} $w={108}>Results for N =</Bold>
              <CountField $w={39} $h={22}>6</CountField>
              <Line $ml={12}><Bold $s={14}>Poles</Bold></Line>
            </Line>
            <Line $mt={33} $ml={16} $gap={27}>
              <Column $w={206}>
                <ColumnTitle>Zero</ColumnTitle>
                <ListField $w={206} $h={219}>{zeros.map((z) => <div key={z}>{z}</div>)}</ListField>
              </Column>
              <Column $w={206}>
                <ColumnTitle>Pole</ColumnTitle>
                <ListField $w={206} $h={219}>
                  {poles.map(([a, b]) => <div key={a}>{a}<Misspelt>{b}</Misspelt></div>)}
                </ListField>
              </Column>
            </Line>
            <Line $mt={19} $ml={16}><Button $w={160} $h={22}>Get Command Line Output</Button></Line>
            <Line $mt={8} $ml={16}><Field $w={439} $h={105} /></Line>
          </LeftCol>
          <RightCol>
            <Line $center>
              <PathField $w={526} $h={22}>
                Results saved to: C:\Users\user\Documents\MATLAB\TFestimate_App\tf_ResultFolder\TF_Results_6788
              </PathField>
              <Line $ml={5} $mt={2}><Bold $s={15.8}>Status</Bold></Line>
              <Lamp />
            </Line>
            <Line>
              <GainCol>
                <GainBox>
                  <ColumnTitle $pl={0}>Gain</ColumnTitle>
                  <ListField $w={101} $h={54} $bold>-0.0025</ListField>
                </GainBox>
                <ButtonStack>
                  <Button $w={109} $h={58} $big>Revert</Button>
                  <Button $w={109} $h={62} $big $blue>Get New TF</Button>
                </ButtonStack>
              </GainCol>
              <Plots><MagPlot /><PhasePlot /></Plots>
            </Line>
          </RightCol>
        </Columns>
        <Line $ml={24}>
          <SosLabel>SOS Filter (FOTON)</SosLabel>
          <Sos $w={953} $h={144}>
            <SosLine>{"sos(-0.002466382170,  [ -1.99986007977329;  0.99986011348679; -2.00047027805624;  1.00047007412055;"}</SosLine>
            <SosLine $indent>{"-1.99998020466025;  0.99998087272238; -2.00105250543382;  1.00105389163667;"}</SosLine>
            <SosLine $indent>{"-1.99998374129174;  0.99998380108465; -1.99978189398489;  0.99978195849323; ],\"o\")"}</SosLine>
          </Sos>
        </Line>
      </TabPanel>
    </FigureBody>
  </Figure>
);

const bands: [string, number, number, number, number][] = [
  ["#86b39e", 122, 141, 74, 92], ["#5f9580", 141, 163, 92, 111], ["#3f7049", 163, 190, 111, 142],
  ["#649481", 190, 320, 142, 267], ["#3f7049", 320, 344, 267, 295], ["#679a86", 344, 404, 295, 354],
  ["#466f4b", 404, 426, 354, 376], ["#36a066", 426, 436, 376, 388], ["#25804f", 436, 600, 388, 600],
];

export default function App() {
  return (
    <Desktop>
      <Global />
      <TitleBar>
        <QuickTools><QuickIcons /></QuickTools>
        <AppTitle>Plots - Paint</AppTitle>
        <WindowButtons>
          <svg width="50" height="20" viewBox="0 0 50 20">
            <path d="M6 12h8" stroke="#222" strokeWidth="2" />
            <path d="M31.500 6.500h7v7h-7zM33.500 4.500h7v8" fill="none" stroke="#222" />
            <path d="M31 7h8" stroke="#222" strokeWidth="2" />
          </svg>
          <CloseButton $w={45} $h={19} $bg="#bcbcbc">
            <svg width="8" height="8" viewBox="0 0 8 8"><path d="M0.500 0.500L7.500 7.500M7.500 0.500L0.500 7.500" stroke="#fff" strokeWidth="1.600" /></svg>
          </CloseButton>
        </WindowButtons>
      </TitleBar>
      <MenuTabs>
        <FileTab>File</FileTab>
        <MenuTab $w={58} $active>Home</MenuTab>
        <MenuTab $w={53}>View</MenuTab>
        <MenuEnd>
          <Chevron dir="up" c="#aaa" />
          <svg width="15" height="15" viewBox="0 0 15 15">
            <circle cx="7.500" cy="7.500" r="7" fill="#1979ca" />
            <path d="M5.300 5.500Q5.300 3.500 7.500 3.500Q9.700 3.500 9.700 5.500Q9.700 6.500 7.700 7.800V9M7.700 10.500V12" fill="none" stroke="#fff" strokeWidth="1.500" />
          </svg>
        </MenuEnd>
      </MenuTabs>
      <PaintRibbon />
      <Workspace>
        <Margin />
        <Canvas />
        <VScroll>
          <ArrowSlot $w={15} $h={17}><Chevron dir="up" /></ArrowSlot>
          <VThumb />
          <Fill />
          <ArrowSlot $w={15} $h={19}><Chevron dir="down" /></ArrowSlot>
        </VScroll>
      </Workspace>
      <HScroll>
        <ArrowSlot $w={17} $h={15}><Chevron dir="left" /></ArrowSlot>
        <HThumb />
        <Fill />
        <ArrowSlot $w={17} $h={15}><Chevron dir="right" /></ArrowSlot>
        <ArrowSlot $w={17} $h={15} />
      </HScroll>
      <StatusBar>
        <StatusPart $w={156} $pl={3}>
          <svg width="12" height="12" viewBox="0 0 12 12" stroke="#27466e" fill="none"><path d="M6 1v10M1 6h10M4.500 2.500L6 1L7.500 2.500M4.500 9.500L6 11L7.500 9.500M2.500 4.500L1 6L2.500 7.500M9.500 4.500L11 6L9.500 7.500" /></svg>
        </StatusPart>
        <StatusPart $w={156} $pl={5}>
          <svg width="14" height="13" viewBox="0 0 14 13" stroke="#27466e" fill="none"><path d="M4.500 1.500h8v7h-8z" strokeDasharray="2 1" /><path d="M1.500 10V2M0 3.500L1.500 1.500L3 3.500M4 11.500h9M11 10l2 1.500l-2 1.500" /></svg>
        </StatusPart>
        <StatusPart $w={156} $pl={5}>
          <svg width="14" height="13" viewBox="0 0 14 13" stroke="#27466e" fill="none"><path d="M4.500 1.500h8v7h-8zM1.500 10V2M0 3.500L1.500 1.500L3 3.500M4 11.500h9M11 10l2 1.500l-2 1.500" /></svg>
          1920 × 1080px
        </StatusPart>
        <StatusPart $w={156} $pl={7}>
          <svg width="11" height="12" viewBox="0 0 11 12" stroke="#27466e" fill="none"><path d="M0.500 0.500h10v11h-10zM2.500 0.500v4h6v-4M2.500 11.500v-4h6v4M4.500 9v2" /></svg>
          Size: 299.3KB
        </StatusPart>
        <Fill />
        <StatusPart $w={1} $pl={0} />
        <ZoomPart>
          100%
          <svg width="145" height="24" viewBox="0 0 145 24">
            <g fill="#f7f7f7" stroke="#8a8a8a">
              <circle cx="14" cy="12" r="7.500" />
              <circle cx="136" cy="12" r="7.500" />
              <path d="M32.500 10h85v2.500h-85z" fill="#e7eaea" stroke="#d0d3d4" />
              <path d="M71 3.500h8.500v11L75.300 18.500L71 14.500z" />
            </g>
            <path d="M10 12h8M132 12h8M136 8v8" stroke="#444" strokeWidth="2" />
          </svg>
        </ZoomPart>
      </StatusBar>
      <TaskBar>
        <Wallpaper>
          <svg width="579" height="39" viewBox="0 0 579 39">
            {bands.map(([c, a, b, d, e]) => <path key={a} d={`M${a} 0H${b}L${e} 39H${d}Z`} fill={c} />)}
          </svg>
        </Wallpaper>
        <Start>
          <svg width="27" height="26" viewBox="0 0 27 26" fill="#fff"><path d="M0 4L11 2.300V12H0ZM12 2.100L27 0V12H12ZM0 13H11V23.700L0 22ZM12 13H27V26L12 23.900Z" /></svg>
        </Start>
        <Task $bg={green} $ml={0}>
          <svg width="30" height="30" viewBox="0 0 30 30">
            <rect width="30" height="30" fill="#2672ec" />
            <circle cx="15" cy="15" r="6" fill="#fff" />
            <circle cx="15" cy="15" r="10" fill="none" stroke="#fff" strokeWidth="3.500" strokeDasharray="1.600 3.636" />
          </svg>
          Weather
        </Task>
        <Task $bg={green}>
          <svg width="30" height="30" viewBox="0 0 30 30">
            <rect width="30" height="30" fill="#7a00f8" />
            <circle cx="18.500" cy="11" r="7" fill="none" stroke="#fff" strokeWidth="2.600" />
            <path d="M14 16.500L5 26" stroke="#fff" strokeWidth="3" />
          </svg>
          Search
        </Task>
        <Task $bg={green}>
          <svg width="30" height="30" viewBox="0 0 30 30">
            <circle cx="15" cy="15" r="14.500" fill="#fbc116" />
            <path d="M2.400 7.700A14.500 14.500 0 0 0 14 29.500L21 18.500L9 18.500Z" fill="#2aa04c" />
            <path d="M2.400 7.700A14.500 14.500 0 0 1 27.700 8.200H15L9 18.500Z" fill="#d9412f" />
            <circle cx="15" cy="15" r="6.800" fill="#fff" />
            <circle cx="15" cy="15" r="5.300" fill="#4587f3" />
          </svg>
          Nikhil-Mukund/T...
        </Task>
        <Task $bg={green}><Membrane s={30} />MATLAB R2017a</Task>
        <Task $bg="linear-gradient(125deg, #57a17b 38%, #7fb89d 42%, #5fa383 75%)" $ml={0}><Membrane s={30} />App Designer - C:...</Task>
        <Task $bg="linear-gradient(100deg, #8fc3a8, #7fb69b 55%, #9dcab3)" $ml={1} $active><FigIcon w={30} h={31} />UI Figure</Task>
        <Task $bg={tealGreen} $gap={6}>
          <svg width="30" height="32" viewBox="0 0 30 32">
            <path d="M8 4L22 1V27L10 31Z" fill="#e3c765" />
            <path d="M2 1L8 4V30L2 26Z" fill="#f8eab0" />
            <path d="M8 4L11 3V30L8 30Z" fill="#c9a23e" />
            <path d="M11 8L21 3V27L11 30Z" fill="#f3dd8e" />
          </svg>
          TFestimate_App
        </Task>
        <Task $bg={tealGreen}><PaletteIcon />Plots - Paint</Task>
        <Tray>
          <TrayIcons>
            <svg width="92" height="22" viewBox="0 0 92 22">
              <path d="M4 13L8 8.500L12 13Z" fill="#fff" />
              <path d="M25 8h3l5-4v14l-5-4h-3z" fill="#fff" />
              <path d="M35 8q2 3 0 6M37.500 6q3.500 5 0 10" stroke="#fff" fill="none" strokeWidth="1.200" />
              <path d="M53.500 6.500h9v8h-9zM55 17.500h6M58 14v3M49.500 4.500h4v4h-4zM51.500 8v8h3" stroke="#fff" fill="none" strokeWidth="1.400" />
              <path d="M73 4v14" stroke="#fff" strokeWidth="1.400" />
              <path d="M75 5q3-1.500 5 0t5 0v7H75z" fill="#fff" />
              <circle cx="83" cy="14" r="4.500" fill="#dd3b2f" />
              <path d="M81 12l4 4M85 12l-4 4" stroke="#fff" strokeWidth="1.400" />
            </svg>
          </TrayIcons>
          <Clock>16:55<br />04-04-2017</Clock>
        </Tray>
      </TaskBar>
      <UIFigure />
    </Desktop>
  );
}
